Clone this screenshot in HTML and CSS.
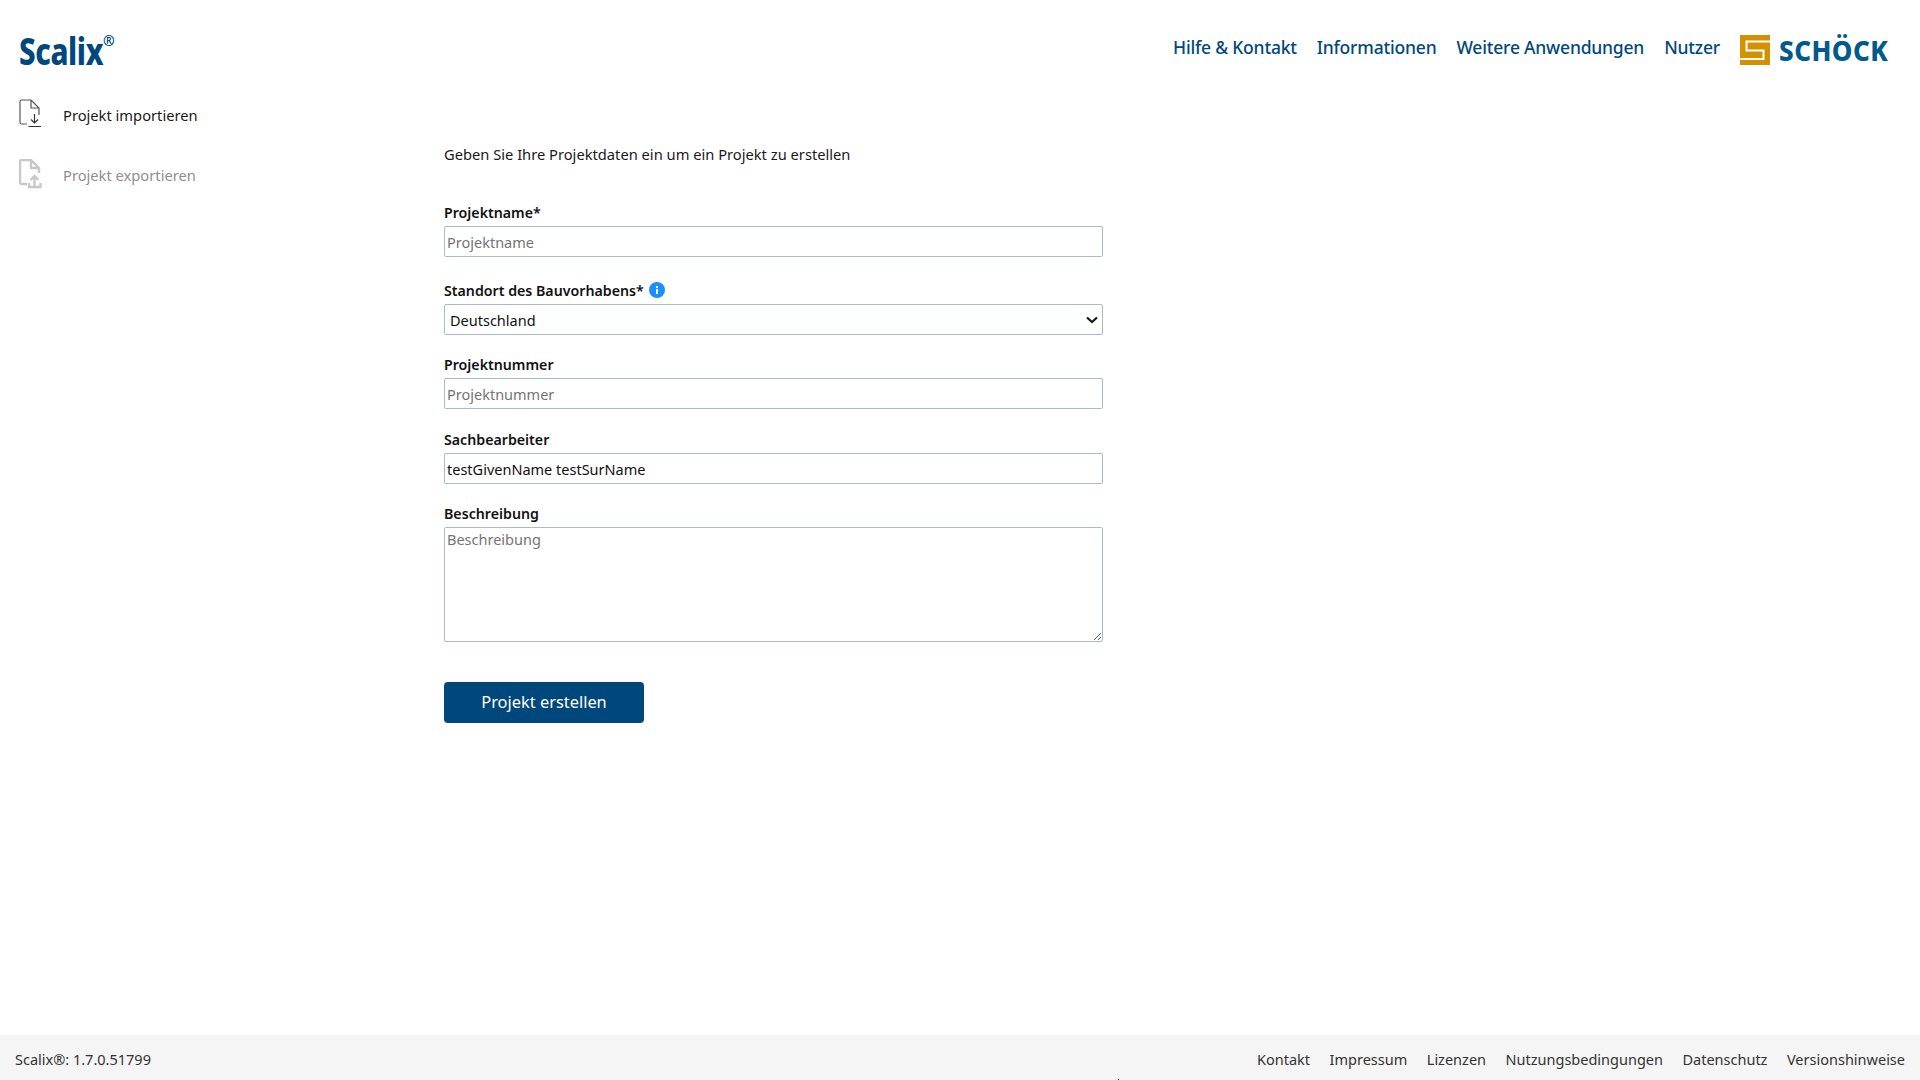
FILE: index.html
```html
<!DOCTYPE html>
<html lang="de">
<head>
<meta charset="utf-8">
<title>Scalix</title>
<link rel="stylesheet" href="styles.css">
</head>
<body>
<div class="page">
  <header class="topbar">
    <div class="brand"><span class="brand-name">Scalix</span><span class="brand-reg">®</span></div>
    <nav class="topnav">
      <a>Hilfe &amp; Kontakt</a>
      <a>Informationen</a>
      <a>Weitere Anwendungen</a>
      <a>Nutzer</a>
      <div class="schoeck">
        <svg class="schoeck-mark" width="30" height="30" viewBox="0 0 30 30"><rect width="30" height="30" fill="#d39100"/><path d="M30 6.500H6.500V15.500H23.500V24H0" fill="none" stroke="#fff" stroke-width="2"/></svg>
        <span class="schoeck-name">SCHÖCK</span>
      </div>
    </nav>
  </header>
  <div class="body-row">
    <aside class="sidebar">
      <div class="side-item">
        <svg width="26" height="30" viewBox="0 0 26 30" fill="none" stroke="#555" stroke-width="1.200"><path d="M8 25H2.500Q1 25 1 23.500V2.500Q1 1 2.500 1H12L20 9V16M12 1V9H20"/><path d="M15.500 15V24M12 20.500L15.500 24L19 20.500M9.500 27.500H22" stroke="#333"/></svg>
        <span>Projekt importieren</span>
      </div>
      <div class="side-item disabled">
        <svg width="26" height="30" viewBox="0 0 26 30" fill="none" stroke="#c8c8c8" stroke-width="2.400"><path d="M8 25H2.500Q1 25 1 23.500V2.500Q1 1 2.500 1H12L20 9V14M12 1V9H20"/><path d="M15.500 28V17M11.500 21L15.500 17L19.500 21M10 24V28H21.500V24"/></svg>
        <span>Projekt exportieren</span>
      </div>
    </aside>
    <main class="content">
      <p class="intro">Geben Sie Ihre Projektdaten ein um ein Projekt zu erstellen</p>
      <form class="form">
        <div class="field f-name">
          <label>Projektname*</label>
          <input type="text" placeholder="Projektname">
        </div>
        <div class="field f-site">
          <label>Standort des Bauvorhabens*
            <svg class="info" width="16" height="16" viewBox="0 0 16 16"><circle cx="8" cy="8" r="8" fill="#1890ff"/><rect x="7" y="7" width="2" height="5" fill="#fff"/><rect x="7" y="4" width="2" height="2" fill="#fff"/></svg>
          </label>
          <div class="select-wrap">
            <select><option>Deutschland</option></select>
            <svg class="chevron" width="12" height="8" viewBox="0 0 12 8"><path d="M1 1.500L6 6L11 1.500" fill="none" stroke="#1a1a1a" stroke-width="2.200"/></svg>
          </div>
        </div>
        <div class="field f-num">
          <label>Projektnummer</label>
          <input type="text" placeholder="Projektnummer">
        </div>
        <div class="field f-person">
          <label>Sachbearbeiter</label>
          <input type="text" value="testGivenName testSurName">
        </div>
        <div class="field f-desc">
          <label>Beschreibung</label>
          <textarea placeholder="Beschreibung"></textarea>
        </div>
        <button type="button" class="submit">Projekt erstellen</button>
      </form>
    </main>
  </div>
  <footer class="footer">
    <span>Scalix®: 1.7.0.51799</span>
    <nav class="footnav">
      <a>Kontakt</a><a>Impressum</a><a>Lizenzen</a><a>Nutzungsbedingungen</a><a>Datenschutz</a><a>Versionshinweise</a>
    </nav>
    <i class="cursor-tick"></i>
  </footer>
</div>
</body>
</html>
```
FILE: styles.css
```css
* { box-sizing: border-box; }
html, body { margin: 0; height: 100%; }
body { font-family: "Noto Sans", "Open Sans", sans-serif; font-size: 14.7px; color: #1a1a1a; background: #fff; }
.page { height: 1080px; display: flex; flex-direction: column; overflow: hidden; }
.topbar { height: 90px; display: flex; justify-content: space-between; padding: 0 30px 0 19px; flex: none; }
.brand { padding-top: 27px; color: #00487c; display: flex; align-items: flex-start; }
.brand-name { font-size: 37px; line-height: 48px; font-weight: 800; display: inline-block; transform: scaleX(.8); transform-origin: left top; width: 84px; letter-spacing: -.5px; }
.brand-reg { font-size: 14px; font-weight: 700; line-height: 16px; margin-top: 6px; }
.topnav { display: flex; align-items: flex-start; gap: 20px; padding-top: 33px; color: #00487c; font-size: 17.5px; font-weight: 500; }
.topnav a { line-height: 29px; letter-spacing: -.2px; }
.schoeck { display: flex; align-items: center; gap: 9px; padding-top: 2px; }
.schoeck-name { font-size: 28px; line-height: 30px; font-weight: 800; color: #005a8c; display: inline-block; width: 111px; letter-spacing: .5px; transform: scaleX(.93); transform-origin: left center; white-space: nowrap; }
.body-row { flex: 1; display: flex; }
.sidebar { width: 444px; flex: none; padding: 9px 0 0 19px; }
.side-item { height: 60px; display: flex; align-items: flex-start; gap: 18px; }
.side-item span { line-height: 30px; padding-top: 1px; }
.side-item.disabled { color: #8f8f8f; }
.content { width: 659px; padding-top: 50px; }
.intro { margin: 0 0 33px; line-height: 28px; }
.form { display: flex; flex-direction: column; }
.field { display: flex; flex-direction: column; }
.field label { font-weight: 600; font-size: 14.2px; line-height: 22px; padding-top: 1px; height: 25px; display: flex; align-items: flex-start; gap: 5px; color: #111; }
.field label .info { margin-top: 2px; }
.f-name { margin-bottom: 22px; }
.f-site { margin-bottom: 18px; }
.f-num { margin-bottom: 19px; }
.f-person { margin-bottom: 18px; }
.field input, .field select, .field textarea { width: 659px; border: 1px solid #a9bbd2; border-radius: 2px; background: #fff; font: inherit; font-size: 14.5px; color: #111; padding: 0 2px; margin: 0; outline: none; }
.field input { height: 31px; }
.select-wrap { position: relative; }
.field select { display: block; height: 31px; padding-left: 5px; appearance: none; }
.chevron { position: absolute; right: 5px; top: 12px; pointer-events: none; }
.field textarea { height: 115px; padding: 2px; display: block; line-height: 19px; }
.field ::placeholder { color: #757575; opacity: 1; }
.submit { width: 200px; height: 41px; margin-top: 40px; padding: 0 0 2px; background: #00487c; color: #fff; border: 0; border-radius: 4px; font: inherit; font-size: 16.4px; }
.footer { position: relative; height: 45px; flex: none; background: #f5f5f5; display: flex; justify-content: space-between; align-items: center; padding: 2px 15px 0; font-size: 14.5px; color: #333; }
.footnav { display: flex; gap: 19.500px; }
.cursor-tick { position: absolute; left: 1118px; bottom: 0; width: 1px; height: 1px; background: #222; }
```
